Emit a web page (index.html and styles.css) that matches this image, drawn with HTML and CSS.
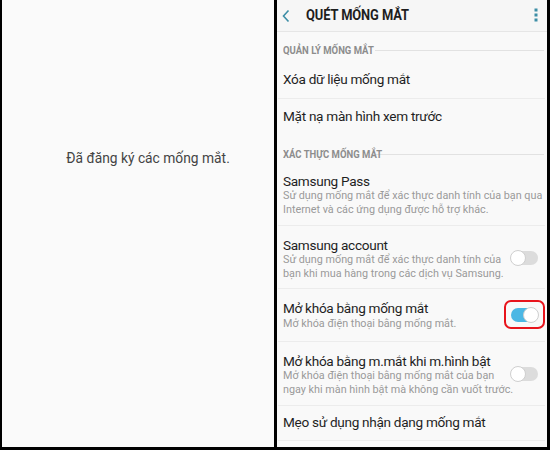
FILE: index.html
```html
<!DOCTYPE html>
<html lang="vi">
<head>
<meta charset="utf-8">
<link rel="stylesheet" href="styles.css">
</head>
<body>
<div class="frame">
  <div class="left">
    <p class="registered">Đã đăng ký các mống mắt.</p>
  </div>
  <div class="divider-v"></div>
  <div class="right">
    <div class="appbar">
      <svg class="back" width="10" height="14" viewBox="0 0 10 14"><path d="M7.5 1.5 L2.5 7 L7.5 12.5" fill="none" stroke="#3d8ea6" stroke-width="1.6"/></svg>
      <span class="title">QUÉT MỐNG MẮT</span>
      <svg class="more" width="4" height="14" viewBox="0 0 4 14"><rect x="0.5" y="0.5" width="3" height="3" fill="#3d8ea6"/><rect x="0.5" y="5.5" width="3" height="3" fill="#3d8ea6"/><rect x="0.5" y="10.5" width="3" height="3" fill="#3d8ea6"/></svg>
    </div>
    <div class="section sec1"><span class="sec-label">QUẢN LÝ MỐNG MẮT</span><span class="sec-line"></span></div>
    <div class="item simple xoa"><span class="item-title">Xóa dữ liệu mống mắt</span></div>
    <div class="item simple matna nodiv"><span class="item-title">Mặt nạ màn hình xem trước</span></div>
    <div class="section sec2"><span class="sec-label">XÁC THỰC MỐNG MẮT</span><span class="sec-line"></span></div>
    <div class="item multi pass">
      <div class="texts">
        <div class="item-title">Samsung Pass</div>
        <div class="item-sub">Sử dụng mống mắt để xác thực danh tính của bạn qua<br>Internet và các ứng dụng được hỗ trợ khác.</div>
      </div>
    </div>
    <div class="item multi account">
      <div class="texts">
        <div class="item-title">Samsung account</div>
        <div class="item-sub">Sử dụng mống mắt để xác thực danh tính của<br>bạn khi mua hàng trong các dịch vụ Samsung.</div>
      </div>
      <span class="toggle"><span class="knob"></span></span>
    </div>
    <div class="item multi unlock">
      <div class="texts">
        <div class="item-title">Mở khóa bằng mống mắt</div>
        <div class="item-sub">Mở khóa điện thoại bằng mống mắt.</div>
      </div>
      <span class="highlight"><span class="toggle on"><span class="knob"></span></span></span>
    </div>
    <div class="item multi screenon">
      <div class="texts">
        <div class="item-title">Mở khóa bằng m.mắt khi m.hình bật</div>
        <div class="item-sub">Mở khóa điện thoại bằng mống mắt của bạn<br>ngay khi màn hình bật mà không cần vuốt trước.</div>
      </div>
      <span class="toggle"><span class="knob"></span></span>
    </div>
    <div class="item simple tips"><span class="item-title">Mẹo sử dụng nhận dạng mống mắt</span></div>
  </div>
</div>
</body>
</html>
```
FILE: styles.css
```css
* { box-sizing: border-box; }
html, body { margin: 0; padding: 0; background: #000; }
body { width: 550px; height: 450px; overflow: hidden; font-family: Roboto, "Noto Sans", sans-serif; }
.frame {
  display: flex;
  width: 550px;
  height: 450px;
  padding: 0 3px 3px 2px;
  background: #000;
}
.left {
  width: 272px;
  background: #fafafa;
  display: flex;
  align-items: flex-start;
  justify-content: center;
  padding-left: 20px;
}
.registered {
  margin: 150px 0 0 0;
  font-size: 13.8px;
  line-height: 16px;
  color: #444;
}
.divider-v { width: 3px; background: #000; }
.right {
  flex: 1;
  background: #f9f9f9;
  display: flex;
  flex-direction: column;
  overflow: hidden;
}
.appbar {
  height: 32px;
  flex: none;
  display: flex;
  align-items: center;
  padding: 0 0 1px 4px;
  background: #f6f6f6;
  border-bottom: 1px solid #e6e6e6;
}
.back { flex: none; margin-top: 1px; }
.title {
  margin-left: 15px;
  font-size: 14px;
  font-weight: 700;
  color: #1e1e1e;
  letter-spacing: -0.1px;
  display: inline-block;
  white-space: nowrap;
  transform: scaleX(0.92);
  transform-origin: left center;
}
.more { margin-left: auto; margin-right: 9px; }
.section {
  flex: none;
  display: flex;
  align-items: center;
  padding: 0 3px 0 6px;
}
.sec1 { height: 33px; padding-top: 3px; }
.sec2 { height: 37px; padding-top: 1px; }
.sec-label {
  font-size: 10px;
  font-weight: 700;
  color: #8d8d8d;
  white-space: nowrap;
  display: inline-block;
  transform: scaleX(0.95);
  transform-origin: left center;
  width: 88px;
}
.sec2 .sec-label { width: 84px; }
.sec-line { flex: 1; height: 1px; background: #e2e2e2; margin-left: 4px; margin-top: 1px; }
.item {
  flex: none;
  display: flex;
  align-items: center;
  margin: 0 2px 0 1px;
  padding: 0 0 0 5px;
  border-bottom: 1px solid #ececec;
}
.item.nodiv { border-bottom: none; }
.item-title {
  font-size: 13.6px;
  line-height: 16px;
  letter-spacing: -0.3px;
  color: #1f1f1f;
  white-space: nowrap;
}
.item-sub {
  font-size: 10.8px;
  line-height: 13.5px;
  color: #9a9a9a;
  white-space: nowrap;
}
.xoa { height: 34px; padding-bottom: 5px; }
.matna { height: 36px; padding-bottom: 3px; }
.multi { align-items: flex-start; }
.texts { flex: 1; min-width: 0; }
.pass { height: 54px; padding-top: 1px; }
.account { height: 63px; padding-top: 11px; }
.unlock { height: 53px; padding-top: 11px; }
.unlock .item-sub { margin-top: 1px; }
.screenon { height: 64px; padding-top: 11px; }
.tips { height: 35px; padding-bottom: 3px; }
.toggle {
  position: relative;
  display: block;
  flex: none;
  width: 27px;
  height: 14px;
  border-radius: 7px;
  background: #dcdcdc;
  margin: 14px 7px 0 auto;
}
.toggle .knob {
  position: absolute;
  top: -1px;
  left: -1px;
  width: 16px;
  height: 16px;
  border-radius: 50%;
  background: #fff;
  border: 1px solid #cfcfcf;
}
.toggle.on { background: #4cb7e4; margin: 0; }
.toggle.on .knob { left: auto; right: -1px; }
.highlight {
  flex: none;
  margin: 0 0 0 auto;
  width: 41px;
  height: 29px;
  border: 2px solid #e8141c;
  border-radius: 7px;
  display: flex;
  align-items: center;
  justify-content: center;
  padding-top: 1px;
}
```
